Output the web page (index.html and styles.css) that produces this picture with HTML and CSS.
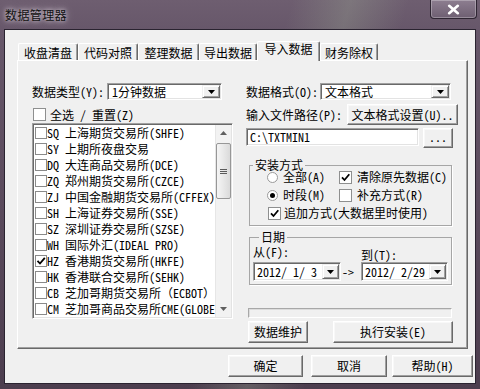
FILE: index.html
```html
<!DOCTYPE html>
<html lang="zh-CN">
<head>
<meta charset="utf-8">
<title>数据管理器</title>
<link rel="stylesheet" href="styles.css">
</head>
<body>
<div class="window">
  <div class="titlebar">
    <span class="title">数据管理器</span>
    <div class="close"><svg width="13" height="11" viewBox="0 0 13 11"><path d="M2.2 1.8 L10.8 9.2 M10.8 1.8 L2.2 9.2" stroke="#fff" stroke-width="2.6" stroke-linecap="round"/></svg></div>
  </div>
  <div class="client">
    <div class="tabs">
      <div class="tab t1">收盘清盘</div>
      <div class="tab t2">代码对照</div>
      <div class="tab t3">整理数据</div>
      <div class="tab t4">导出数据</div>
      <div class="tab sel">导入数据</div>
      <div class="tab t6">财务除权</div>
    </div>
    <div class="panel">
      <div class="col-left">
        <div class="row r1">
          <span class="l1">数据类型(Y):</span>
          <div class="combo c1"><span class="val">1分钟数据</span><span class="drop raised"><svg width="7" height="4" viewBox="0 0 7 4"><path d="M0 0H7L3.5 4Z" fill="#000"/></svg></span></div>
        </div>
        <div class="chk-all"><span class="cb"></span><span class="txt">全选 / 重置(Z)</span></div>
        <div class="listbox">
          <div class="items">
            <div class="li"><span class="cb sm"></span>SQ 上海期货交易所(SHFE)</div>
            <div class="li"><span class="cb sm"></span>SY 上期所夜盘交易</div>
            <div class="li"><span class="cb sm"></span>DQ 大连商品交易所(DCE)</div>
            <div class="li"><span class="cb sm"></span>ZQ 郑州期货交易所(CZCE)</div>
            <div class="li"><span class="cb sm"></span>ZJ 中国金融期货交易所(CFFEX)</div>
            <div class="li"><span class="cb sm"></span>SH 上海证券交易所(SSE)</div>
            <div class="li"><span class="cb sm"></span>SZ 深圳证券交易所(SZSE)</div>
            <div class="li"><span class="cb sm"></span>WH 国际外汇(IDEAL PRO)</div>
            <div class="li"><span class="cb sm"><svg width="10" height="10" viewBox="0 0 10 10"><path d="M1.5 4.8 L4 7.5 L8.8 1.8" fill="none" stroke="#000" stroke-width="1.8"/></svg></span>HZ 香港期货交易所(HKFE)</div>
            <div class="li"><span class="cb sm"></span>HK 香港联合交易所(SEHK)</div>
            <div class="li"><span class="cb sm"></span>CB 芝加哥期货交易所（ECBOT）</div>
            <div class="li"><span class="cb sm"></span>CM 芝加哥商品交易所CME(GLOBE</div>
          </div>
          <div class="vscroll">
            <div class="sb-btn"><svg width="7" height="4" viewBox="0 0 7 4"><path d="M0 4H7L3.5 0Z" fill="#606060"/></svg></div>
            <div class="sb-track">
              <div class="thumb"><svg width="7" height="7" viewBox="0 0 7 7"><path d="M0 1.5H7M0 3.5H7M0 5.5H7" stroke="#5a5a5a" stroke-width="1"/></svg></div>
            </div>
            <div class="sb-btn"><svg width="7" height="4" viewBox="0 0 7 4"><path d="M0 0H7L3.5 4Z" fill="#606060"/></svg></div>
          </div>
        </div>
      </div>
      <div class="col-right">
        <div class="row r1">
          <span class="l2">数据格式(O):</span>
          <div class="combo c2"><span class="val">文本格式</span><span class="drop raised"><svg width="7" height="4" viewBox="0 0 7 4"><path d="M0 0H7L3.5 4Z" fill="#000"/></svg></span></div>
        </div>
        <div class="row r2">
          <span class="l3">输入文件路径(P):</span>
          <div class="btn fmt">文本格式设置(U)..</div>
        </div>
        <div class="row r3">
          <div class="path">C:\TXTMIN1</div>
          <div class="btn dots">...</div>
        </div>
        <fieldset class="grp g1">
          <legend>安装方式</legend>
          <div class="opts">
            <div class="opt"><span class="radio"></span><span class="ot">全部(A)</span></div>
            <div class="opt"><span class="cb"><svg width="11" height="11" viewBox="0 0 11 11"><path d="M2 5.3 L4.5 8 L9.3 2.2" fill="none" stroke="#000" stroke-width="1.8"/></svg></span><span class="ot">清除原先数据(C)</span></div>
            <div class="opt"><span class="radio on"></span><span class="ot">时段(M)</span></div>
            <div class="opt"><span class="cb"></span><span class="ot">补充方式(R)</span></div>
            <div class="opt wide"><span class="cb"><svg width="11" height="11" viewBox="0 0 11 11"><path d="M2 5.3 L4.5 8 L9.3 2.2" fill="none" stroke="#000" stroke-width="1.8"/></svg></span><span class="ot2">追加方式(大数据里时使用)</span></div>
          </div>
        </fieldset>
        <fieldset class="grp g2">
          <legend>日期</legend>
          <div class="dates">
            <div class="dcol d1">
              <span class="dl">从(F):</span>
              <div class="date w1"><span class="val">2012/ 1/ 3</span><span class="drop raised"><svg width="7" height="4" viewBox="0 0 7 4"><path d="M0 0H7L3.5 4Z" fill="#000"/></svg></span></div>
            </div>
            <span class="arrow">-&gt;</span>
            <div class="dcol d2">
              <span class="dl">到(T):</span>
              <div class="date w2"><span class="val">2012/ 2/29</span><span class="drop raised"><svg width="7" height="4" viewBox="0 0 7 4"><path d="M0 0H7L3.5 4Z" fill="#000"/></svg></span></div>
            </div>
          </div>
        </fieldset>
        <div class="progress"></div>
        <div class="actions">
          <div class="btn maint">数据维护</div>
          <div class="btn exec">执行安装(E)</div>
        </div>
      </div>
    </div>
    <div class="footer">
      <div class="btn ok">确定</div>
      <div class="btn cancel">取消</div>
      <div class="btn help">帮助(H)</div>
    </div>
  </div>
</div>
</body>
</html>
```

FILE: styles.css
```css
* { box-sizing: border-box; margin: 0; padding: 0; }
html, body { width: 480px; height: 389px; overflow: hidden; }
body {
  font-family: "Noto Sans Mono CJK SC", "Noto Sans CJK SC", "Liberation Mono", monospace;
  font-size: 12px;
  line-height: 12px;
  color: #000;
  background: #5a4a5b;
}
.window {
  width: 480px;
  height: 389px;
  display: flex;
  flex-direction: column;
  background:
    linear-gradient(105deg, rgba(255,255,255,0) 50%, rgba(170,190,160,.25) 60%, rgba(255,255,255,0) 70%),
    linear-gradient(to bottom, #6e5e70 0, #67576a 30px, #5b4b5d 200px, #4c3d4e 389px);
}
.titlebar { height: 29px; display: flex; align-items: flex-start; flex: none; }
.title {
  margin: 8px 0 0 5px;
  font-family: "Noto Sans CJK SC", sans-serif;
  font-size: 12px;
  line-height: 13px;
  letter-spacing: .4px;
  color: #111;
  text-shadow: 0 0 4px rgba(235,225,235,.9), 0 0 8px rgba(235,225,235,.6);
}
.close {
  margin-left: auto;
  margin-right: 3px;
  width: 47px;
  height: 19px;
  border: 1px solid #2e2532;
  border-top: none;
  border-radius: 0 0 4px 4px;
  background: linear-gradient(#8d7e90, #6e5f72);
  box-shadow: inset 0 0 0 1px rgba(255,255,255,.28);
  display: flex;
  align-items: center;
  justify-content: center;
}
.client {
  margin-left: 4px;
  width: 472px;
  height: 355px;
  flex: none;
  border: 1px solid #2a2330;
  background: #f0f0f0;
  padding: 11px 0 0 12px;
  display: flex;
  flex-direction: column;
}

/* tabs */
.tabs { height: 19px; display: flex; align-items: flex-end; padding-left: 1px; flex: none; }
.tab {
  height: 17px;
  flex: none;
  border: 1px solid;
  border-bottom: 0;
  border-color: #fff #696969 #696969 #fff;
  border-radius: 2px 2px 0 0;
  box-shadow: inset -1px 0 0 #a0a0a0;
  background: #f0f0f0;
  display: flex;
  justify-content: center;
  align-items: center;
  padding-top: 1px;
}
.t1, .t2 { width: 60px; }
.t3 { width: 61px; }
.t4 { width: 58px; }
.t6 { width: 58px; }
.tab.sel {
  width: 63px;
  height: 20px;
  margin-bottom: -1px;
  position: relative;
  z-index: 1;
  align-items: flex-start;
  padding-top: 1px;
}

/* panel */
.panel {
  width: 451px;
  height: 289px;
  flex: none;
  border: 1px solid;
  border-color: #fff #696969 #696969 #fff;
  box-shadow: inset -1px -1px 0 #a0a0a0;
  padding: 22px 0 0 14px;
  display: flex;
}
.col-left { width: 201px; display: flex; flex-direction: column; flex: none; }
.col-right { width: 212px; margin-left: 13px; display: flex; flex-direction: column; flex: none; }

.row { display: flex; align-items: center; flex: none; }
.r1 { height: 17px; }
.l1 { width: 75px; }
.l2 { width: 74px; }

.combo, .path, .date, .listbox {
  background: #fff;
  border: 1px solid;
  border-color: #a0a0a0 #fff #fff #a0a0a0;
  box-shadow: inset 1px 1px 0 #696969, inset -1px -1px 0 #e3e3e3;
}
.combo { height: 17px; padding: 1px; display: flex; align-items: center; }
.c1 { width: 115px; }
.c2 { width: 131px; }
.val { flex: 1; padding-left: 3px; line-height: 13px; white-space: nowrap; }
.raised {
  background: #f0f0f0;
  border: 1px solid;
  border-color: #f0f0f0 #696969 #696969 #f0f0f0;
  box-shadow: inset 1px 1px 0 #fff, inset -1px -1px 0 #a0a0a0;
}
.drop { width: 18px; height: 13px; flex: none; display: flex; align-items: center; justify-content: center; }
.drop svg { display: block; }

.cb {
  width: 13px;
  height: 13px;
  flex: none;
  border: 1px solid #8e8f8f;
  background: #fff;
  display: flex;
  align-items: center;
  justify-content: center;
}
.cb svg { display: block; }
.chk-all { margin-top: 8px; height: 13px; display: flex; align-items: center; padding-left: 1px; flex: none; }
.chk-all .txt { margin-left: 4px; }

/* listbox */
.listbox { margin-top: 2px; height: 196px; width: 201px; padding: 1px; display: flex; flex: none; }
.items { flex: 1; overflow: hidden; padding-left: 1px; }
.li { height: 16px; line-height: 16px; display: flex; align-items: center; white-space: nowrap; }
.cb.sm { width: 12px; height: 12px; border-color: #8a8a8a; }
.vscroll { width: 16px; flex: none; display: flex; flex-direction: column; background: #f2f2f2; border-left: 1px solid #e6e6e6; }
.sb-btn { height: 16px; flex: none; display: flex; align-items: center; justify-content: center; }
.sb-btn svg { display: block; }
.sb-track { flex: 1; }
.thumb {
  margin: 2px 0 0 0;
  height: 56px;
  border: 1px solid #979797;
  border-radius: 2px;
  background: linear-gradient(to right, #f5f5f5, #e8e8e8 50%, #dadada);
  display: flex;
  align-items: center;
  justify-content: center;
}

/* right column */
.r2 { margin-top: 4px; height: 21px; }
.l3 { width: 101px; }
.btn {
  background: #f0f0f0;
  border: 1px solid;
  border-color: #fff #696969 #696969 #fff;
  box-shadow: inset -1px -1px 0 #a0a0a0, inset 1px 1px 0 #f8f8f8;
  display: flex;
  align-items: center;
  justify-content: center;
  white-space: nowrap;
  flex: none;
}
.fmt { width: 111px; height: 21px; }
.r3 { margin-top: 3px; height: 20px; align-items: flex-start; }
.path { width: 173px; height: 18px; padding-left: 3px; display: flex; align-items: center; flex: none; }
.dots { margin-left: 4px; width: 30px; height: 20px; align-items: flex-end; padding-bottom: 4px; }

.grp {
  margin-left: 3px;
  width: 203px;
  border: 1px solid #a6a6a6;
  box-shadow: 1px 1px 0 #fff;
  min-width: 0;
  flex: none;
}
.grp legend { line-height: 12px; padding: 0 2px; }
.g1 { margin-top: 11px; padding: 0 0 6px 0; }
.g1 legend { margin-left: 3px; }
.opts {
  display: grid;
  grid-template-columns: 72px auto;
  grid-auto-rows: 12px;
  row-gap: 6px;
  padding-left: 17px;
  align-items: center;
}
.opt { display: flex; align-items: center; height: 12px; }
.opt.wide { grid-column: 1 / 3; }
.opt .ot { margin-left: 5px; }
.opt.wide .cb { margin-left: 1px; }
.opt .ot2 { margin-left: 3px; }
.radio {
  width: 11px;
  height: 11px;
  flex: none;
  border-radius: 50%;
  border: 1px solid #9a9a9a;
  background: #fff;
  display: flex;
  align-items: center;
  justify-content: center;
}
.radio.on::after { content: ""; width: 5px; height: 5px; border-radius: 50%; background: #000; }

.g2 { margin-top: 5px; padding: 0 0 3px 3px; }
.g2 legend { margin-left: 6px; }
.dates { display: flex; align-items: flex-end; }
.dcol { display: flex; flex-direction: column; }
.d1 .dl { margin-top: 3px; margin-bottom: 4px; }
.d2 .dl { margin-top: 6px; margin-bottom: 1px; }
.date { height: 19px; padding: 1px; display: flex; align-items: center; }
.date .val { padding-left: 2px; }
.date .drop { width: 17px; height: 15px; }
.w1 { width: 88px; }
.w2 { width: 87px; }
.arrow { width: 20px; height: 19px; line-height: 19px; padding-left: 1px; white-space: nowrap; }

.progress {
  margin-top: 23px;
  margin-left: 2px;
  width: 204px;
  height: 10px;
  flex: none;
  border: 1px solid;
  border-color: #a8a8a8 #fff #fff #a8a8a8;
  box-shadow: 1px 1px 0 #dcdcdc inset;
}
.actions { margin-top: 3px; height: 22px; display: flex; flex: none; }
.maint { margin-left: 2px; width: 60px; height: 22px; }
.exec { margin-left: 25px; width: 120px; height: 22px; }

.footer { margin-top: 6px; height: 22px; display: flex; justify-content: flex-end; padding-right: 2px; flex: none; }
.ok { width: 75px; margin-right: 8px; }
.cancel { width: 76px; margin-right: 5px; }
.help { width: 81px; }
```
